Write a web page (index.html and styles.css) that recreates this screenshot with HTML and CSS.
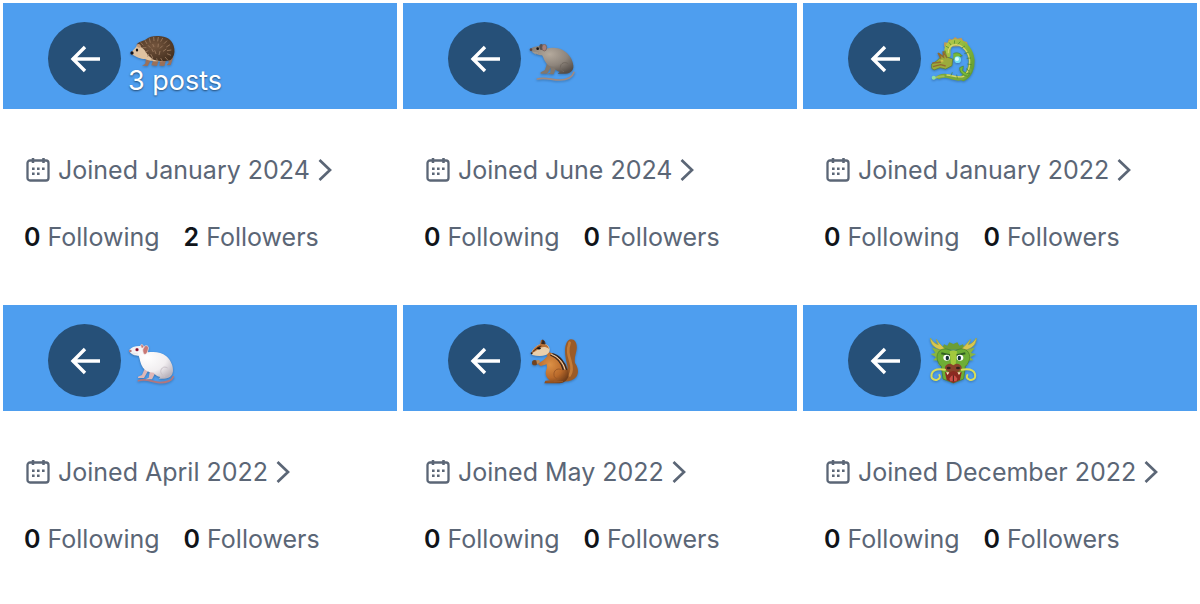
FILE: index.html
```html
<!DOCTYPE html>
<html lang="en">
<head>
<meta charset="utf-8">
<title>Profiles</title>
<link rel="stylesheet" href="styles.css">
</head>
<body>
<svg class="defs" aria-hidden="true">
  <defs>
    <symbol id="back" viewBox="0 0 32 28"><path d="M16 2 4 14l12 12M3 14h28" fill="none" stroke="currentColor" stroke-width="3.4"/></symbol>
    <symbol id="calendar" viewBox="0 0 24 24">
      <rect x="1.500" y="2.500" width="21" height="20" rx="2.500" fill="none" stroke="currentColor" stroke-width="2.300"/>
      <path d="M7 0v5M17.500 0v5" stroke="currentColor" stroke-width="2.500"/>
      <path d="M6 9.500h2.600v2.600H6zM11 9.500h2.600v2.600H11zM16 9.500h2.600v2.600H16zM6 14.500h2.600v2.600H6zM11 14.500h2.600v2.600H11z" fill="currentColor"/>
    </symbol>
    <symbol id="chevron" viewBox="0 0 14 24"><path d="m1.500 2 10.500 10L1.500 22" fill="none" stroke="currentColor" stroke-width="2.700"/></symbol>
    <radialGradient id="greyFur" cx=".45" cy=".3" r=".75"><stop offset="0" stop-color="#b5aa9d"/><stop offset=".55" stop-color="#8d847b"/><stop offset="1" stop-color="#544d48"/></radialGradient>
    <radialGradient id="whiteFur" cx=".4" cy=".35" r=".75"><stop offset="0" stop-color="#fff"/><stop offset=".6" stop-color="#f1eef0"/><stop offset="1" stop-color="#b9b2bb"/></radialGradient>
    <radialGradient id="orangeFur" cx=".4" cy=".4" r=".7"><stop offset="0" stop-color="#dc9146"/><stop offset=".6" stop-color="#b9692a"/><stop offset="1" stop-color="#6f3c18"/></radialGradient>
    <radialGradient id="spines" cx=".45" cy=".4" r=".65"><stop offset="0" stop-color="#75563e"/><stop offset="1" stop-color="#45301f"/></radialGradient>
    <linearGradient id="scales" x1="0" y1="0" x2="1" y2="1"><stop offset="0" stop-color="#b5c94a"/><stop offset=".5" stop-color="#84b43a"/><stop offset="1" stop-color="#5d9a32"/></linearGradient>
  </defs>
</svg>
<main class="grid">
  <section class="card">
    <header class="banner">
      <button class="back" aria-label="Back"><svg><use href="#back"/></svg></button>
      <div class="title">
        <svg class="hedgehog" viewBox="24 24 150 108" role="img" aria-label="Hedgehog">
          <path d="M78 100l-2 16-10 6 17 1 9-17zM100 104l-6 17 17 2 5-18zM121 105l-3 17 15 1 5-17zM145 96l1 17-7 8 13-1 8-23z" fill="#9b7059"/>
          <path d="M51 62c8-8 20-9 29-3l20 38 37 4-3 6c-20 4-44 2-59-5-13-1-25-5-42-16 2-9 10-13 18-24z" fill="#dfc2a0"/>
          <path d="M50 59c4-9 17-10 26-15 14-11 31-13 47-10 23 2 37 16 40 37 2 13-2 25-11 34-14 5-37 4-51-1-10-6-18-13-23-22-4-9-13-16-28-23z" fill="url(#spines)"/>
          <path d="m62 52 8 9m5-15 6 11m7-17 3 13m10-17 1 12m13-12-2 13m15-10-6 11m19-3-9 9m18 3-11 7m15 9-13 2m12 14-12-5m3 20-9-10m-7 14-6-11m-9 13-3-12m-14 7 1-11m-14-1 3-8m-10-6 9-4m-18-9 12 0m5-7 7 7m7-11 4 9m13-10-1 11m14-5-8 8m19 2-10 7m-34-8 5 10m4-5 4 11m12-9-3 12m-25-3 6 11" stroke="#9c7c60" stroke-width="2.500"/>
          <path d="M49 60c7-7 14-1 14 7-7 3-11 0-14-7z" fill="#c49b78"/>
          <ellipse cx="51" cy="75" rx="3.500" ry="4.500" fill="#15110f"/><ellipse cx="36" cy="84" rx="5" ry="5" fill="#17151b"/>
        </svg>
        <span class="posts">3 posts</span>
      </div>
    </header>
    <div class="details">
      <a class="joined" href="#"><svg class="calendar"><use href="#calendar"/></svg><span>Joined January 2024</span><svg class="chevron"><use href="#chevron"/></svg></a>
      <div class="stats"><a href="#"><b>0</b> Following</a><a href="#"><b>2</b> Followers</a></div>
    </div>
  </section>

  <section class="card">
    <header class="banner">
      <button class="back" aria-label="Back"><svg><use href="#back"/></svg></button>
      <div class="title">
        <svg class="emoji" viewBox="24 11 150 150" role="img" aria-label="Rat">
          <path d="M52 146c26-6 42 3 67 3 23 0 38-8 43-23" fill="none" stroke="#a08a81" stroke-width="5" stroke-linecap="round"/>
          <path d="M82 96l-7 23-13 7v4h19l14-22zM93 106l-2 21-11 5h21l8-21z" fill="#81776d"/>
          <path d="M30 57c6-6 16-9 27-10 10-2 17 1 21 8 18-4 35-4 51 5 19 11 29 28 31 46 1 14-8 22-23 24H113l6-5c-9-3-15-8-18-14-12-2-20-7-24-15-6-8-6-15-11-21-10 0-27-4-36-18z" fill="url(#greyFur)"/>
          <path d="M145 101c-9-9-24-3-24 10 0 7 6 11 11 13" fill="none" stroke="#716860" stroke-width="3"/>
          <ellipse cx="64" cy="50" rx="6" ry="9" fill="#5a5150"/><ellipse cx="73" cy="52" rx="7" ry="10" fill="#a7807a" stroke="#6b5e58" stroke-width="2"/>
          <circle cx="53" cy="55" r="4" fill="#161314"/><circle cx="33" cy="58" r="4" fill="#5d4847"/>
          <path d="m37 65 11 7m-8-7 14 4" stroke="#c3bbb3"/>
        </svg>
      </div>
    </header>
    <div class="details">
      <a class="joined" href="#"><svg class="calendar"><use href="#calendar"/></svg><span>Joined June 2024</span><svg class="chevron"><use href="#chevron"/></svg></a>
      <div class="stats"><a href="#"><b>0</b> Following</a><a href="#"><b>0</b> Followers</a></div>
    </div>
  </section>

  <section class="card">
    <header class="banner">
      <button class="back" aria-label="Back"><svg><use href="#back"/></svg></button>
      <div class="title">
        <svg class="emoji" viewBox="24 11 150 150" role="img" aria-label="Dragon">
          <path d="m72 49 1-13 10 1 4-12 10 3 8-8 8 5 11-3 6 10 11 3 3 12" fill="#c69a50"/>
          <g fill="none" stroke-linecap="round">
            <path d="M83 73C78 52 90 35 108 36c27 1 44 27 47 54 1 24-9 45-25 53" stroke="url(#scales)" stroke-width="18"/>
            <path d="M149 120c-10 25-30 29-50 22-15-6-29-8-42-2" stroke="#79a83a" stroke-width="12"/>
            <path d="M71 138c-12-1-21 2-30 6" stroke="#a1bd56" stroke-width="6"/>
            <path d="M85 67c-1-15 9-25 24-24 22 2 39 26 40 49 1 21-6 36-18 46-15 6-33-3-50-4" stroke="#d5d66d" stroke-width="4"/>
          </g>
          <path d="m77 47 10 6m0-17 6 8m11-14-1 10m18-6-7 8m21 5-10 6m20 13-12 4m20 13-13 1m15 19-13-2m6 21-10-7m-4 22-8-10m-14 17-2-11m-17 3 4-10" stroke="#43812d" stroke-width="2"/>
          <path d="M100 70c9-4 18-4 27 7l-8 1 3 9-10-5-12 5M119 112l11-5-2 14 12 9 10-2-7 10c-15-4-24-11-24-26z" fill="#79b937" stroke="#4c8530" stroke-width="2"/>
          <path d="M35 101c10-5 19-11 26-20l-3-12 10 9 7-17 5 19 18 6-2 20-19 10-17-4-18 7-7-5z" fill="#9bab3c" stroke="#587c2b" stroke-width="2"/>
          <path d="m63 85-9-17 17 13-2-18 12 20M37 98c8-1 15 0 26-3m-24 14 23-6 15 4" fill="none" stroke="#936a31" stroke-width="4"/>
          <circle cx="66" cy="92" r="4" fill="#f0df55"/><circle cx="66" cy="92" r="1.500" fill="#24231a"/>
          <circle cx="113" cy="88" r="10" fill="#72dbf2"/><circle cx="111" cy="86" r="6" fill="#d8ffff"/><circle cx="41" cy="142" r="6" fill="#8edfa1"/>
        </svg>
      </div>
    </header>
    <div class="details">
      <a class="joined" href="#"><svg class="calendar"><use href="#calendar"/></svg><span>Joined January 2022</span><svg class="chevron"><use href="#chevron"/></svg></a>
      <div class="stats"><a href="#"><b>0</b> Following</a><a href="#"><b>0</b> Followers</a></div>
    </div>
  </section>

  <section class="card">
    <header class="banner">
      <button class="back" aria-label="Back"><svg><use href="#back"/></svg></button>
      <div class="title">
        <svg class="emoji" viewBox="24 18 150 150" role="img" aria-label="Mouse">
          <path d="M55 152c23-8 40 4 64 6 22 0 36-5 41-18" fill="none" stroke="#b3767c" stroke-width="5" stroke-linecap="round"/>
          <path d="M76 112l-10 23-12 5v4h18l13-23zM90 121l-4 22-9 5h19l11-21z" fill="#dfb7b7"/>
          <path d="M27 61c6-9 17-13 31-13 12 0 22 7 26 19 20-3 40-1 55 12 14 12 21 30 20 45-2 15-11 21-27 22h-16l5-5c-9-2-16-7-20-13-15-1-25-6-32-15-8-11-9-26-13-36-10 1-26-4-29-16z" fill="url(#whiteFur)"/>
          <path d="M62 45c5-4 10 3 10 9h-8zM74 48c9-4 14 4 10 12-2 8-4 14-12 13-4-8-6-17 2-25z" fill="#c97875" stroke="#f2e8e8" stroke-width="2"/>
          <circle cx="51" cy="59" r="5" fill="#b32743"/><circle cx="51" cy="59" r="2.500" fill="#57142a"/><circle cx="31" cy="63" r="4" fill="#b8787b"/>
          <path d="m34 70 12 6m-8-7 16 3" stroke="#d0c5c9"/><path d="M143 114c-12-8-24 3-20 15 2 5 7 9 12 10" fill="none" stroke="#c9c1c9" stroke-width="3"/>
        </svg>
      </div>
    </header>
    <div class="details">
      <a class="joined" href="#"><svg class="calendar"><use href="#calendar"/></svg><span>Joined April 2022</span><svg class="chevron"><use href="#chevron"/></svg></a>
      <div class="stats"><a href="#"><b>0</b> Following</a><a href="#"><b>0</b> Followers</a></div>
    </div>
  </section>

  <section class="card">
    <header class="banner">
      <button class="back" aria-label="Back"><svg><use href="#back"/></svg></button>
      <div class="title">
        <svg class="emoji" viewBox="24 18 150 150" role="img" aria-label="Chipmunk">
          <path d="M127 154c13-12 19-26 16-42-4-18-8-34-8-50 1-20 7-33 18-34 13 0 19 13 17 30-2 15-8 25-5 41 10 14 12 29 4 41-8 10-23 16-42 14z" fill="#9b5b27"/>
          <path d="M149 38c-8 23-4 36 2 55 4 14 8 30-2 43" fill="none" stroke="#c47c38" stroke-width="8" stroke-linecap="round"/>
          <path d="M79 67c11-2 20 3 29 10 22 12 38 32 38 54 0 17-11 27-28 29H73l3-8 14-1c-14-9-16-23-9-37l-1-11-18 5-9-6 18-12 11-11z" fill="url(#orangeFur)"/>
          <path d="M97 71c22 6 38 26 43 49M91 75c20 8 34 25 39 45" fill="none" stroke="#37251d" stroke-width="4"/><path d="M94 73c21 7 35 24 41 46" fill="none" stroke="#ead5b6" stroke-width="3"/>
          <path d="M124 119c-13-6-24 3-22 17 1 7 7 10 13 12l-14 7h28" fill="none" stroke="#9d5927" stroke-width="3"/>
          <path d="M34 68c5-12 14-21 27-26 10-4 20 0 26 9 5 9 1 20-10 24-13 5-27 3-40 0z" fill="#e9cfac"/>
          <path d="M60 43l3-13c7-1 10 5 11 13 8 1 12 8 13 14-11-9-23-7-32 1-8 6-14 10-20 11 4-11 11-19 25-26z" fill="#b87137"/>
          <path d="M65 42l2-12c6 0 8 7 8 13M38 65c9-6 15-15 26-17" fill="#332620" stroke="#4e3020" stroke-width="3"/>
          <ellipse cx="57" cy="55" rx="5" ry="3.500" fill="#17110f"/><circle cx="35" cy="70" r="3" fill="#25191a"/>
          <circle cx="44" cy="98" r="8" fill="#704220"/><path d="m49 91 9-1 2 7-9 6" fill="#c18a52"/>
        </svg>
      </div>
    </header>
    <div class="details">
      <a class="joined" href="#"><svg class="calendar"><use href="#calendar"/></svg><span>Joined May 2022</span><svg class="chevron"><use href="#chevron"/></svg></a>
      <div class="stats"><a href="#"><b>0</b> Following</a><a href="#"><b>0</b> Followers</a></div>
    </div>
  </section>

  <section class="card">
    <header class="banner">
      <button class="back" aria-label="Back"><svg><use href="#back"/></svg></button>
      <div class="title">
        <svg class="emoji" viewBox="24 18 150 150" role="img" aria-label="Dragon face">
          <path d="M61 61 35 52l11 17-14 3 16 10-9 9 19 1-3 13 17 4M138 61l27-9-12 17 15 3-17 10 9 9-19 1 3 13-17 4" fill="#8ab63e"/>
          <path d="m65 59 7-16 10 4 6-10 12 5 12-5 6 10 11-4 7 16z" fill="#6c9e35"/>
          <path d="M68 61C43 56 31 43 31 24c8 11 13 18 24 20-2-6-6-10-6-16 8 13 19 21 27 31zM133 61c25-5 36-18 36-37-8 11-13 18-24 20 2-6 6-10 6-16-8 13-20 21-27 31z" fill="#d9c64f" stroke="#9ea63c" stroke-width="2"/>
          <path d="M58 63c14-12 31-4 42 2 11-6 28-14 42-2 12 14 8 33-6 46l-5 38-31 12-31-12-5-38C50 96 46 77 58 63z" fill="#6eae35" stroke="#447b27" stroke-width="2"/>
          <path d="M89 64c8-4 14-4 22 0l-5 46H94z" fill="#a3c93d"/>
          <path d="m64 70 26 6M136 70l-26 6" stroke="#315f24" stroke-width="6"/>
          <ellipse cx="80" cy="83" rx="10" ry="9" fill="#fff"/><ellipse cx="120" cy="83" rx="10" ry="9" fill="#fff"/><ellipse cx="82" cy="84" rx="5" ry="7" fill="#132f35"/><ellipse cx="118" cy="84" rx="5" ry="7" fill="#132f35"/>
          <path d="M76 109c5-10 17-10 24-3 7-7 19-7 24 3 5 12-6 16-15 14H91c-9 2-20-2-15-14z" fill="#8a422b"/><ellipse cx="86" cy="114" rx="6" ry="4" fill="#34231b"/><ellipse cx="114" cy="114" rx="6" ry="4" fill="#34231b"/>
          <path d="M75 127c16-5 34-5 50 0l-5 23-20 9-20-9z" fill="#8b2921"/><path d="m78 127 5 8 5-8zM122 127l-5 8-5-8z" fill="#f5edbd"/><path d="M88 146q12-20 24 0l-3 8H91z" fill="#cc5049"/><path d="M100 136v18" stroke="#3c1d19" stroke-width="3"/>
          <path d="M75 119c-17-3-36-1-40 13-3 13 5 20 17 17 8-3 9-9 6-14M125 119c17-3 36-1 40 13 3 13-5 20-17 17-8-3-9-9-6-14" fill="none" stroke="#d9dd57" stroke-width="6" stroke-linecap="round"/>
        </svg>
      </div>
    </header>
    <div class="details">
      <a class="joined" href="#"><svg class="calendar"><use href="#calendar"/></svg><span>Joined December 2022</span><svg class="chevron"><use href="#chevron"/></svg></a>
      <div class="stats"><a href="#"><b>0</b> Following</a><a href="#"><b>0</b> Followers</a></div>
    </div>
  </section>
</main>
</body>
</html>
```
FILE: styles.css
```css
* { box-sizing: border-box; }
body {
  margin: 0;
  background: #fff;
  color: #5b6676;
  font-family: Inter, "Liberation Sans", sans-serif;
  font-size: 25px;
  line-height: 32px;
}
.defs { position: absolute; width: 0; height: 0; }
svg { display: block; flex: none; }
a { color: inherit; text-decoration: none; white-space: nowrap; }
.grid {
  display: grid;
  grid-template-columns: repeat(3, 1fr);
  gap: 6px;
  padding: 3px;
}
.card { padding-bottom: 46px; }
.banner {
  display: flex;
  gap: 7px;
  height: 106px;
  padding: 19px 45px 0;
  background: #4e9eef;
}
.back {
  display: grid;
  place-items: center;
  flex: none;
  width: 73px;
  height: 73px;
  padding: 0;
  border: 0;
  border-radius: 50%;
  background: #265078;
  color: #fff;
}
.back svg { width: 32px; height: 28px; }
.title {
  display: flex;
  flex-direction: column;
  justify-content: center;
  height: 73px;
}
.emoji { width: 50px; height: 50px; filter: drop-shadow(0 1px 1px #0004); }
.hedgehog { width: 50px; height: 36px; margin-top: 8px; filter: drop-shadow(0 1px 1px #0004); }
.posts {
  color: #fff;
  font-size: 27px;
  line-height: 24px;
  text-shadow: 0 1px 2px #0008;
}
.details {
  display: flex;
  flex-direction: column;
  align-items: flex-start;
  gap: 35px;
  padding: 45px 21px 0;
}
.joined { display: flex; align-items: center; gap: 8px; padding-left: 2px; }
.calendar { width: 24px; height: 24px; }
.chevron { width: 14px; height: 24px; }
.stats { display: flex; gap: 24px; }
.stats b { color: #101419; font-weight: 600; }
```
